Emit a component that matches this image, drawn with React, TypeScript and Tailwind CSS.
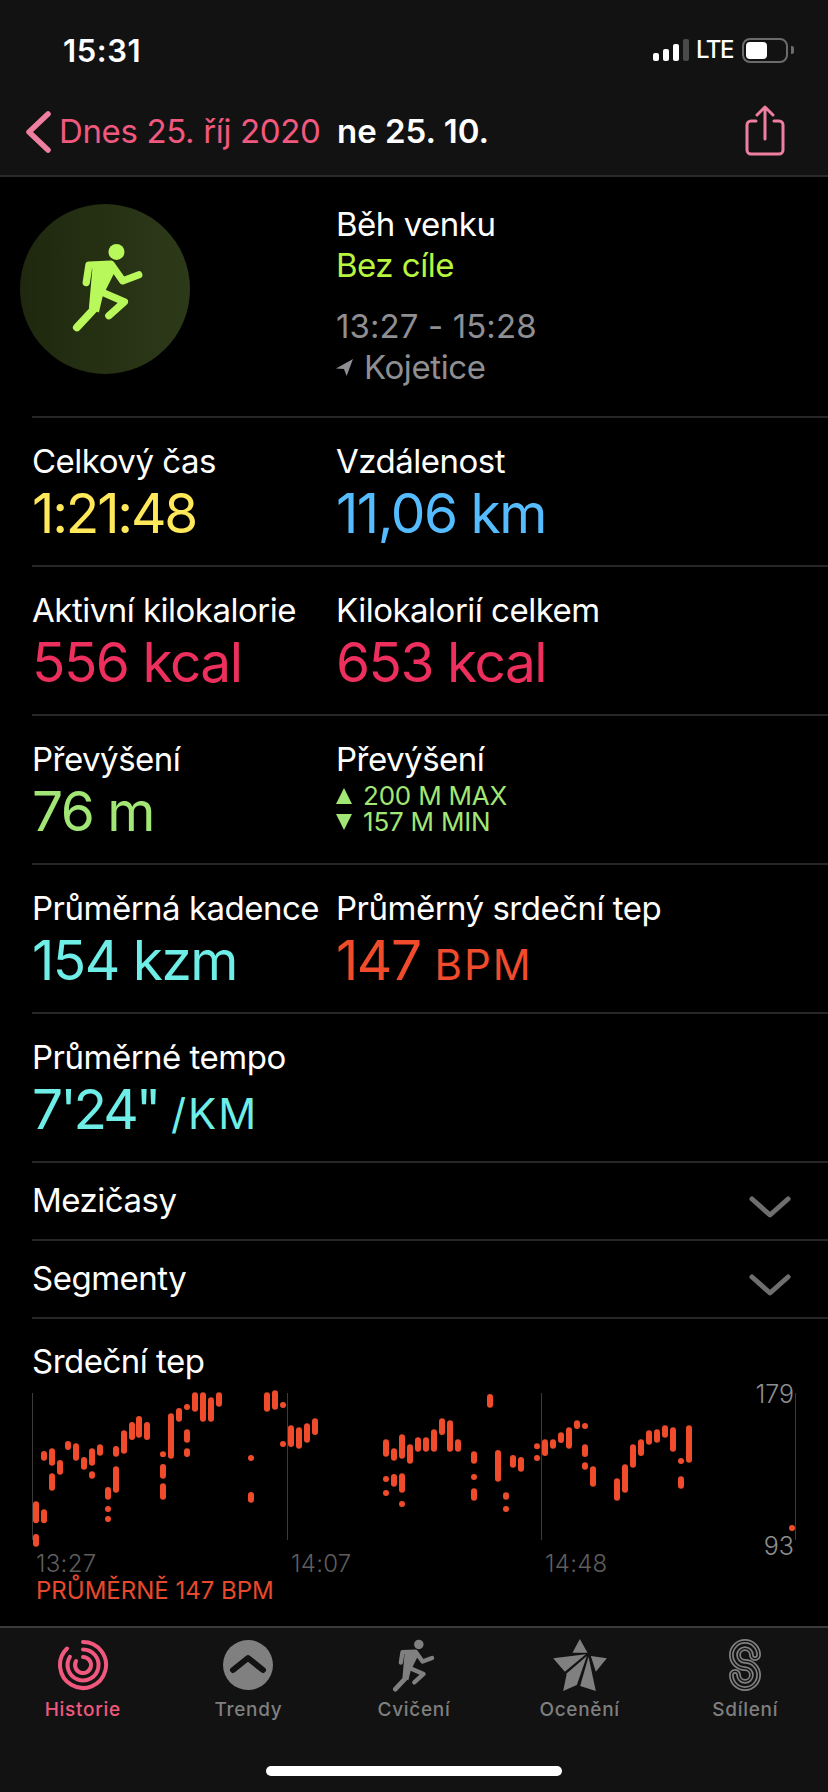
import type { ReactNode } from "react";

const HR_LEFT: number[][] = [
  [108, 424, 490], [108, 522, 560], [132, 273, 302], [132, 448, 490], [156, 265, 317], [156, 340, 392],
  [180, 300, 344], [204, 243, 270], [228, 250, 302], [252, 291, 329], [276, 265, 317], [276, 334, 356],
  [300, 253, 287], [324, 381, 419], [324, 438, 456], [324, 468, 486], [348, 258, 290], [348, 319, 398],
  [372, 211, 281], [396, 186, 240], [417, 168, 233], [441, 186, 240], [489, 274, 291], [489, 312, 356],
  [489, 370, 419], [513, 160, 296], [537, 144, 185], [561, 132, 150], [561, 208, 248], [561, 265, 291],
  [585, 97, 155], [609, 97, 185], [633, 112, 185], [657, 97, 140], [753, 285, 303], [753, 396, 428],
  [801, 97, 155], [825, 91, 149], [849, 126, 144], [849, 243, 261], [873, 196, 261], [897, 202, 266],
  [921, 190, 248], [945, 175, 225], [1158, 238, 290], [1158, 348, 366], [1158, 390, 408], [1182, 265, 302],
  [1182, 342, 380], [1206, 223, 296], [1206, 340, 398], [1206, 423, 441], [1230, 253, 311],
];

const HR_RIGHT: number[][] = [
  [12, 232, 275], [36, 232, 275], [60, 208, 275], [84, 175, 225], [108, 181, 275], [132, 238, 275],
  [180, 274, 311], [180, 342, 360], [180, 385, 422], [228, 102, 143], [252, 270, 365], [276, 397, 419],
  [276, 438, 456], [297, 285, 323], [321, 291, 335], [369, 250, 268], [369, 285, 303], [393, 238, 288],
  [417, 238, 266], [441, 217, 249], [465, 202, 266], [489, 181, 207], [513, 189, 207], [513, 253, 291],
  [513, 307, 329], [537, 319, 380], [609, 355, 422], [633, 313, 398], [657, 253, 323], [681, 238, 288],
  [705, 211, 254], [729, 208, 248], [753, 196, 233], [777, 202, 275], [801, 294, 312], [801, 349, 386],
  [825, 196, 308], [1134, 495, 513],
];

// crops were read at 3x, so bring them back to page pixels
const HR_BARS = [
  ...HR_LEFT.map(([x, a, b]) => [x / 3, 1360 + a / 3, 1360 + b / 3]),
  ...HR_RIGHT.map(([x, a, b]) => [414 + x / 3, 1360 + a / 3, 1360 + b / 3]),
];

function Runner({ className, fill }: { className: string; fill: string }) {
  return (
    <svg viewBox="35 36 218 268" className={className} fill="none" stroke={fill} strokeLinecap="round" strokeLinejoin="round">
      <circle cx="171" cy="63" r="24" fill={fill} stroke="none" />
      <path d="M100 95 160 92 170 115 130 195 118 245 88 232z" fill={fill} stroke="none" />
      <path d="M80 155 88 103 155 100 190 150 238 132" strokeWidth="22" />
      <path d="M103 235 52 290" strokeWidth="24" />
      <path d="M130 185 195 213 148 255" strokeWidth="22" />
    </svg>
  );
}

function Metric({ label, children }: { label: string; children: ReactNode }) {
  return (
    <div className="flex min-w-0 flex-col">
      <div className="text-[33px] leading-[40px] tracking-[-0.5px] whitespace-nowrap text-white">{label}</div>
      {children}
    </div>
  );
}

function Value({ color, children }: { color: string; children: ReactNode }) {
  return <div className={`mt-[3px] h-[58px] text-[55px] leading-[58px] tracking-[-1.5px] whitespace-nowrap ${color}`}>{children}</div>;
}

function MetricRow({ children }: { children: ReactNode }) {
  return <div className="ml-[32px] grid h-[149px] grid-cols-[304px_1fr] border-t-2 border-[#262626] pt-[23px]">{children}</div>;
}

function Expander({ label }: { label: string }) {
  return (
    <div className="ml-[32px] flex h-[78px] items-center justify-between border-t-2 border-[#262626] pr-[37px]">
      <span className="text-[33px] tracking-[-0.5px] text-white">{label}</span>
      <svg viewBox="0 0 42 24" className="mt-[11px] h-[24px] w-[42px]" fill="none" stroke="#6e6e6e" strokeWidth="5" strokeLinecap="round" strokeLinejoin="round">
        <path d="M3 4 21 20 39 4" />
      </svg>
    </div>
  );
}

function TabItem({ label, active, children }: { label: string; active?: boolean; children: ReactNode }) {
  return (
    <div className="flex flex-col items-center">
      <div className="flex h-[54px] items-center justify-center">{children}</div>
      <span className={`mt-[6px] text-[19px] leading-[24px] font-medium tracking-[0.7px] ${active ? "text-[#f0587e]" : "text-[#7f7f7f]"}`}>{label}</span>
    </div>
  );
}

export default function App() {
  return (
    <div className="flex h-[1792px] w-[828px] flex-col overflow-hidden bg-black font-['Inter',sans-serif]">
      <header className="h-[177px] shrink-0 border-b-2 border-[#2a2a2a] bg-[#121212]">
        <div className="flex h-[102px] items-start justify-between pt-[32px] pr-[34px] pl-[63px]">
          <span className="text-[31px] leading-[38px] font-semibold tracking-[0.6px] text-white">15:31</span>
          <div className="mt-[5px] flex items-center">
            <div className="flex items-end gap-[4px]">
              <span className="h-[8px] w-[6px] rounded-[2px] bg-white" />
              <span className="h-[12px] w-[6px] rounded-[2px] bg-white" />
              <span className="h-[17px] w-[6px] rounded-[2px] bg-white" />
              <span className="h-[22px] w-[6px] rounded-[2px] bg-[#4a4a4a]" />
            </div>
            <span className="ml-[7px] text-[24px] leading-[26px] font-medium tracking-[-1.5px] text-white">LTE</span>
            <div className="ml-[9px] h-[25px] w-[46px] rounded-[8px] border-2 border-[#6b6b6b] p-[2px]">
              <div className="h-[17px] w-[21px] rounded-[4px] bg-white" />
            </div>
            <span className="ml-[3px] h-[8px] w-[3px] rounded-r-[2px] bg-[#6b6b6b]" />
          </div>
        </div>
        <div className="flex h-[60px] items-center">
          <svg viewBox="0 0 26 42" className="ml-[25px] h-[42px] w-[26px]" fill="none" stroke="#ee7fa0" strokeWidth="5.5" strokeLinecap="round" strokeLinejoin="round">
            <path d="M23 3 4 21 23 39" />
          </svg>
          <span className="ml-[8px] w-[278px] text-[33px] tracking-[-0.35px] whitespace-nowrap text-[#f0587e]">Dnes 25. říj 2020</span>
          <span className="text-[33px] font-semibold whitespace-nowrap text-white">ne 25. 10.</span>
          <svg viewBox="0 0 40 52" className="mb-[4px] ml-auto mr-[43px] h-[52px] w-[40px]" fill="none" stroke="#ee7fa0" strokeWidth="3" strokeLinecap="round" strokeLinejoin="round">
            <path d="M11 17H6a4 4 0 0 0-4 4v25a4 4 0 0 0 4 4h28a4 4 0 0 0 4-4V21a4 4 0 0 0-4-4h-5" />
            <path d="M20 35V3M12 11l8-8 8 8" />
          </svg>
        </div>
      </header>

      <main className="flex-1">
        <div className="flex h-[239px] pt-[27px]">
          <div className="ml-[20px] flex size-[170px] items-center justify-center rounded-full bg-gradient-to-r from-[#1f280e] to-[#2d3a19]">
            <Runner className="mb-[4px] ml-[4px] h-[89px] w-[73px]" fill="#b9f85a" />
          </div>
          <div className="ml-[146px] flex flex-col">
            <span className="text-[33px] leading-[40px] tracking-[-0.5px] text-white">Běh venku</span>
            <span className="mt-[1px] text-[33px] leading-[40px] tracking-[-0.5px] text-[#b8f53e]">Bez cíle</span>
            <span className="mt-[21px] text-[33px] leading-[40px] tracking-[0.1px] text-[#8e8e93]">13:27 - 15:28</span>
            <span className="mt-[1px] flex items-center text-[33px] leading-[40px] tracking-[-0.4px] text-[#8e8e93]">
              <svg viewBox="0 0 16 16" className="mr-[11px] size-[17px]" fill="#8e8e93">
                <path d="M16 0 0 9l7.5.5L10 16z" />
              </svg>
              Kojetice
            </span>
          </div>
        </div>

        <MetricRow>
          <Metric label="Celkový čas">
            <div className="mt-[3px] h-[58px] text-[55px] leading-[58px] tracking-[-2.2px] whitespace-nowrap text-[#ffe95a]">1:21:48</div>
          </Metric>
          <Metric label="Vzdálenost"><Value color="text-[#55bcff]">11,06 km</Value></Metric>
        </MetricRow>
        <MetricRow>
          <Metric label="Aktivní kilokalorie"><Value color="text-[#ec2f5c]">556 kcal</Value></Metric>
          <Metric label="Kilokalorií celkem"><Value color="text-[#ec2f5c]">653 kcal</Value></Metric>
        </MetricRow>
        <MetricRow>
          <Metric label="Převýšení"><Value color="text-[#a2e675]">76 m</Value></Metric>
          <Metric label="Převýšení">
            <div className="mt-[4px] flex flex-col text-[26px] leading-[26px] tracking-[-0.2px] text-[#a2e675]">
              <span className="flex items-center gap-[11px]">
                <svg viewBox="0 0 16 16" className="size-[16px]" fill="#a2e675"><path d="M8 0 16 16H0z" /></svg>
                200 M MAX
              </span>
              <span className="flex items-center gap-[11px]">
                <svg viewBox="0 0 16 16" className="size-[16px]" fill="#a2e675"><path d="M0 0H16L8 16z" /></svg>
                157 M MIN
              </span>
            </div>
          </Metric>
        </MetricRow>
        <MetricRow>
          <Metric label="Průměrná kadence"><Value color="text-[#6eeee6]">154 kzm</Value></Metric>
          <Metric label="Průměrný srdeční tep">
            <Value color="text-[#f04c2c]">147 <span className="text-[42px] tracking-[2px]">BPM</span></Value>
          </Metric>
        </MetricRow>
        <MetricRow>
          <Metric label="Průměrné tempo">
            <div className="mt-[3px] h-[58px] text-[55px] leading-[58px] tracking-[-3px] whitespace-nowrap text-[#6eeee6]">
              7'24" <span className="text-[42px] tracking-[2px]">/KM</span>
            </div>
          </Metric>
        </MetricRow>

        <Expander label="Mezičasy" />
        <Expander label="Segmenty" />

        <section className="relative ml-[32px] border-t-2 border-[#262626] pt-[22px]">
          <div className="text-[33px] leading-[40px] tracking-[-0.5px] text-white">Srdeční tep</div>
          <svg viewBox="32 1388 796 156" className="mt-[7px] h-[156px] w-[796px]" overflow="visible">
            {[32.5, 287.5, 541.5, 795.5].map((x) => (
              <line key={x} x1={x} x2={x} y1="1393" y2="1540" stroke="#3a3a3a" strokeWidth="1" />
            ))}
            {HR_BARS.map(([x, top, bottom]) => (
              <rect key={`${x}-${top}`} x={x - 3} y={top} width="6" height={bottom - top} rx="3" fill="#f04c2c" />
            ))}
          </svg>
          <span className="absolute top-[60px] right-[34px] text-[25px] leading-[30px] font-light text-[#8e8e8e]">179</span>
          <span className="absolute top-[212px] right-[34px] text-[25px] leading-[30px] font-light text-[#8e8e8e]">93</span>
          <div className="mt-[6px] grid w-[764px] grid-cols-[255px_254px_1fr] pl-[4px] text-[24px] leading-[28px] tracking-[0.3px] font-light text-[#5e5e5e]">
            <span>13:27</span>
            <span>14:07</span>
            <span>14:48</span>
          </div>
          <div className="-mt-px pl-[4px] text-[24px] leading-[28px] text-[#e8492c]">PRŮMĚRNĚ 147 BPM</div>
        </section>
      </main>

      <nav className="relative h-[166px] shrink-0 border-t-2 border-[#3a3a3a] bg-[#121212]">
        <div className="grid grid-cols-5 pt-[10px]">
          <TabItem label="Historie" active>
            <svg viewBox="-26 -26 52 52" className="size-[52px]" fill="none" stroke="#f0587e" strokeWidth="4" strokeLinecap="round">
              <path d="M0-23A23 23 0 1 1-16-16.5" />
              <path d="M0-15.5A15.5 15.5 0 1 1-13.1-8.2" />
              <path d="M0-8A8 8 0 1 1-6.9-4" />
            </svg>
          </TabItem>
          <TabItem label="Trendy">
            <svg viewBox="0 0 50 50" className="size-[50px]">
              <circle cx="25" cy="25" r="25" fill="#808080" />
              <path d="M10 30 25 18 40 30" fill="none" stroke="#121212" strokeWidth="6" strokeLinecap="round" strokeLinejoin="round" />
            </svg>
          </TabItem>
          <TabItem label="Cvičení">
            <Runner className="h-[53px] w-[43px]" fill="#808080" />
          </TabItem>
          <TabItem label="Ocenění">
            <svg viewBox="37 27 161 156" className="h-[52px] w-[54px]" fill="#808080">
              <path d="M117 27 140 68H95z" />
              <path d="M37 85 135 73 72 125z" />
              <path d="M78 130 138 78 108 165 67 183z" />
              <path d="M143 80 165 183 118 168z" />
              <path d="M150 78 198 85 165 125z" />
            </svg>
          </TabItem>
          <TabItem label="Sdílení">
            <svg viewBox="0 0 32 52" className="h-[52px] w-[32px]" fill="none" strokeLinecap="round">
              {[
                [12, "#808080"],
                [8.6, "#121212"],
                [5.8, "#808080"],
                [2.4, "#121212"],
              ].map(([w, c]) => (
                <path
                  key={w}
                  d="M26 16A10 10 0 0 0 16 6 10 10 0 0 0 6 16 10 10 0 0 0 16 26 10 10 0 0 1 26 36 10 10 0 0 1 16 46 10 10 0 0 1 6 36"
                  stroke={c as string}
                  strokeWidth={w}
                />
              ))}
            </svg>
          </TabItem>
        </div>
        <div className="absolute bottom-[16px] left-[266px] h-[10px] w-[296px] rounded-full bg-white" />
      </nav>
    </div>
  );
}
